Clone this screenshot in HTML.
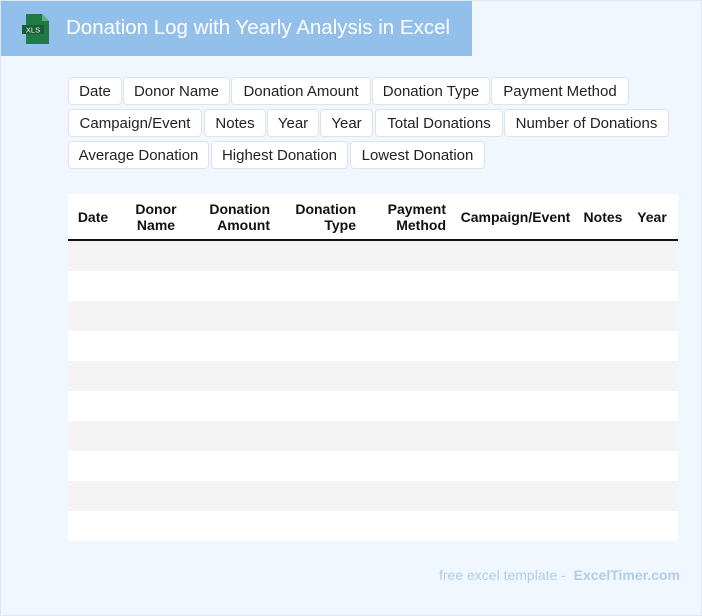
<!DOCTYPE html>
<html><head><style>
body{margin:0;width:702px;height:616px;overflow:hidden;background:#fff;font-family:"Liberation Sans",Arial,sans-serif}
.page{position:absolute;left:0;top:0;width:700px;height:614px;border:1px solid #dfe6ee;background:#f0f7ff}
.hdr{position:absolute;left:0;top:0;width:471px;height:55px;background:#92c0eb}
.hdr .t{position:absolute;left:65px;top:15px;color:#fff;font-size:20.5px;white-space:nowrap}
.chip{position:absolute;height:28px;border:1px solid #dde3ea;border-radius:4px;background:#fff;font-size:15px;line-height:28px;color:#222;text-align:center;box-sizing:border-box}
.tbl{position:absolute;left:67px;top:193px;width:610px;height:347px;background:#fff}
.th{position:absolute;font-weight:bold;font-size:14px;line-height:16px;color:#111;text-align:center}
.row{position:absolute;left:0;width:610px;height:30px}
.foot{position:absolute;right:21px;top:566px;font-size:14px;color:#b2cbe8}
</style></head><body>
<div class="page">
<div class="hdr">
<svg style="position:absolute;left:21px;top:13px" width="30" height="30" viewBox="0 0 30 30"><path d="M4 0h16l7 7v23H4z" fill="#1e7b45"/><path d="M20 0v7h7z" fill="#5fb07f"/><rect x="0" y="11" width="22" height="9" fill="#175e35"/><text x="11" y="18.5" font-size="7.5" fill="#fff" text-anchor="middle" font-family="Liberation Sans">XLS</text></svg>
<div class="t">Donation Log with Yearly Analysis in Excel</div>
</div>
<div class="chip" style="left:67px;top:76px;width:54px">Date</div>
<div class="chip" style="left:122px;top:76px;width:107px">Donor Name</div>
<div class="chip" style="left:230px;top:76px;width:140px">Donation Amount</div>
<div class="chip" style="left:371px;top:76px;width:118px">Donation Type</div>
<div class="chip" style="left:490px;top:76px;width:138px">Payment Method</div>
<div class="chip" style="left:67px;top:108px;width:134px">Campaign/Event</div>
<div class="chip" style="left:203px;top:108px;width:62px">Notes</div>
<div class="chip" style="left:266px;top:108px;width:52px">Year</div>
<div class="chip" style="left:319px;top:108px;width:53px">Year</div>
<div class="chip" style="left:374px;top:108px;width:128px">Total Donations</div>
<div class="chip" style="left:503px;top:108px;width:165px">Number of Donations</div>
<div class="chip" style="left:67px;top:140px;width:141px">Average Donation</div>
<div class="chip" style="left:210px;top:140px;width:137px">Highest Donation</div>
<div class="chip" style="left:349px;top:140px;width:135px">Lowest Donation</div>
<div class="tbl">
<div class="th" style="left:0;width:50px;top:15px">Date</div>
<div class="th" style="left:58px;width:60px;top:7px">Donor<br>Name</div>
<div class="th" style="left:127px;width:75px;top:7px;text-align:right">Donation<br>Amount</div>
<div class="th" style="left:215px;width:73px;top:7px;text-align:right">Donation<br>Type</div>
<div class="th" style="left:300px;width:78px;top:7px;text-align:right">Payment<br>Method</div>
<div class="th" style="left:390px;width:115px;top:15px">Campaign/Event</div>
<div class="th" style="left:512px;width:46px;top:15px">Notes</div>
<div class="th" style="left:564px;width:40px;top:15px">Year</div>
<div style="position:absolute;left:0;top:45px;width:610px;height:2px;background:#111"></div>
<div class="row" style="top:47px;background:#f4f4f4"></div>
<div class="row" style="top:107px;background:#f4f4f4"></div>
<div class="row" style="top:167px;background:#f4f4f4"></div>
<div class="row" style="top:227px;background:#f4f4f4"></div>
<div class="row" style="top:287px;background:#f4f4f4"></div>
</div>
<div class="foot">free excel template - &nbsp;<b>ExcelTimer.com</b></div>
</div>
</body></html>
